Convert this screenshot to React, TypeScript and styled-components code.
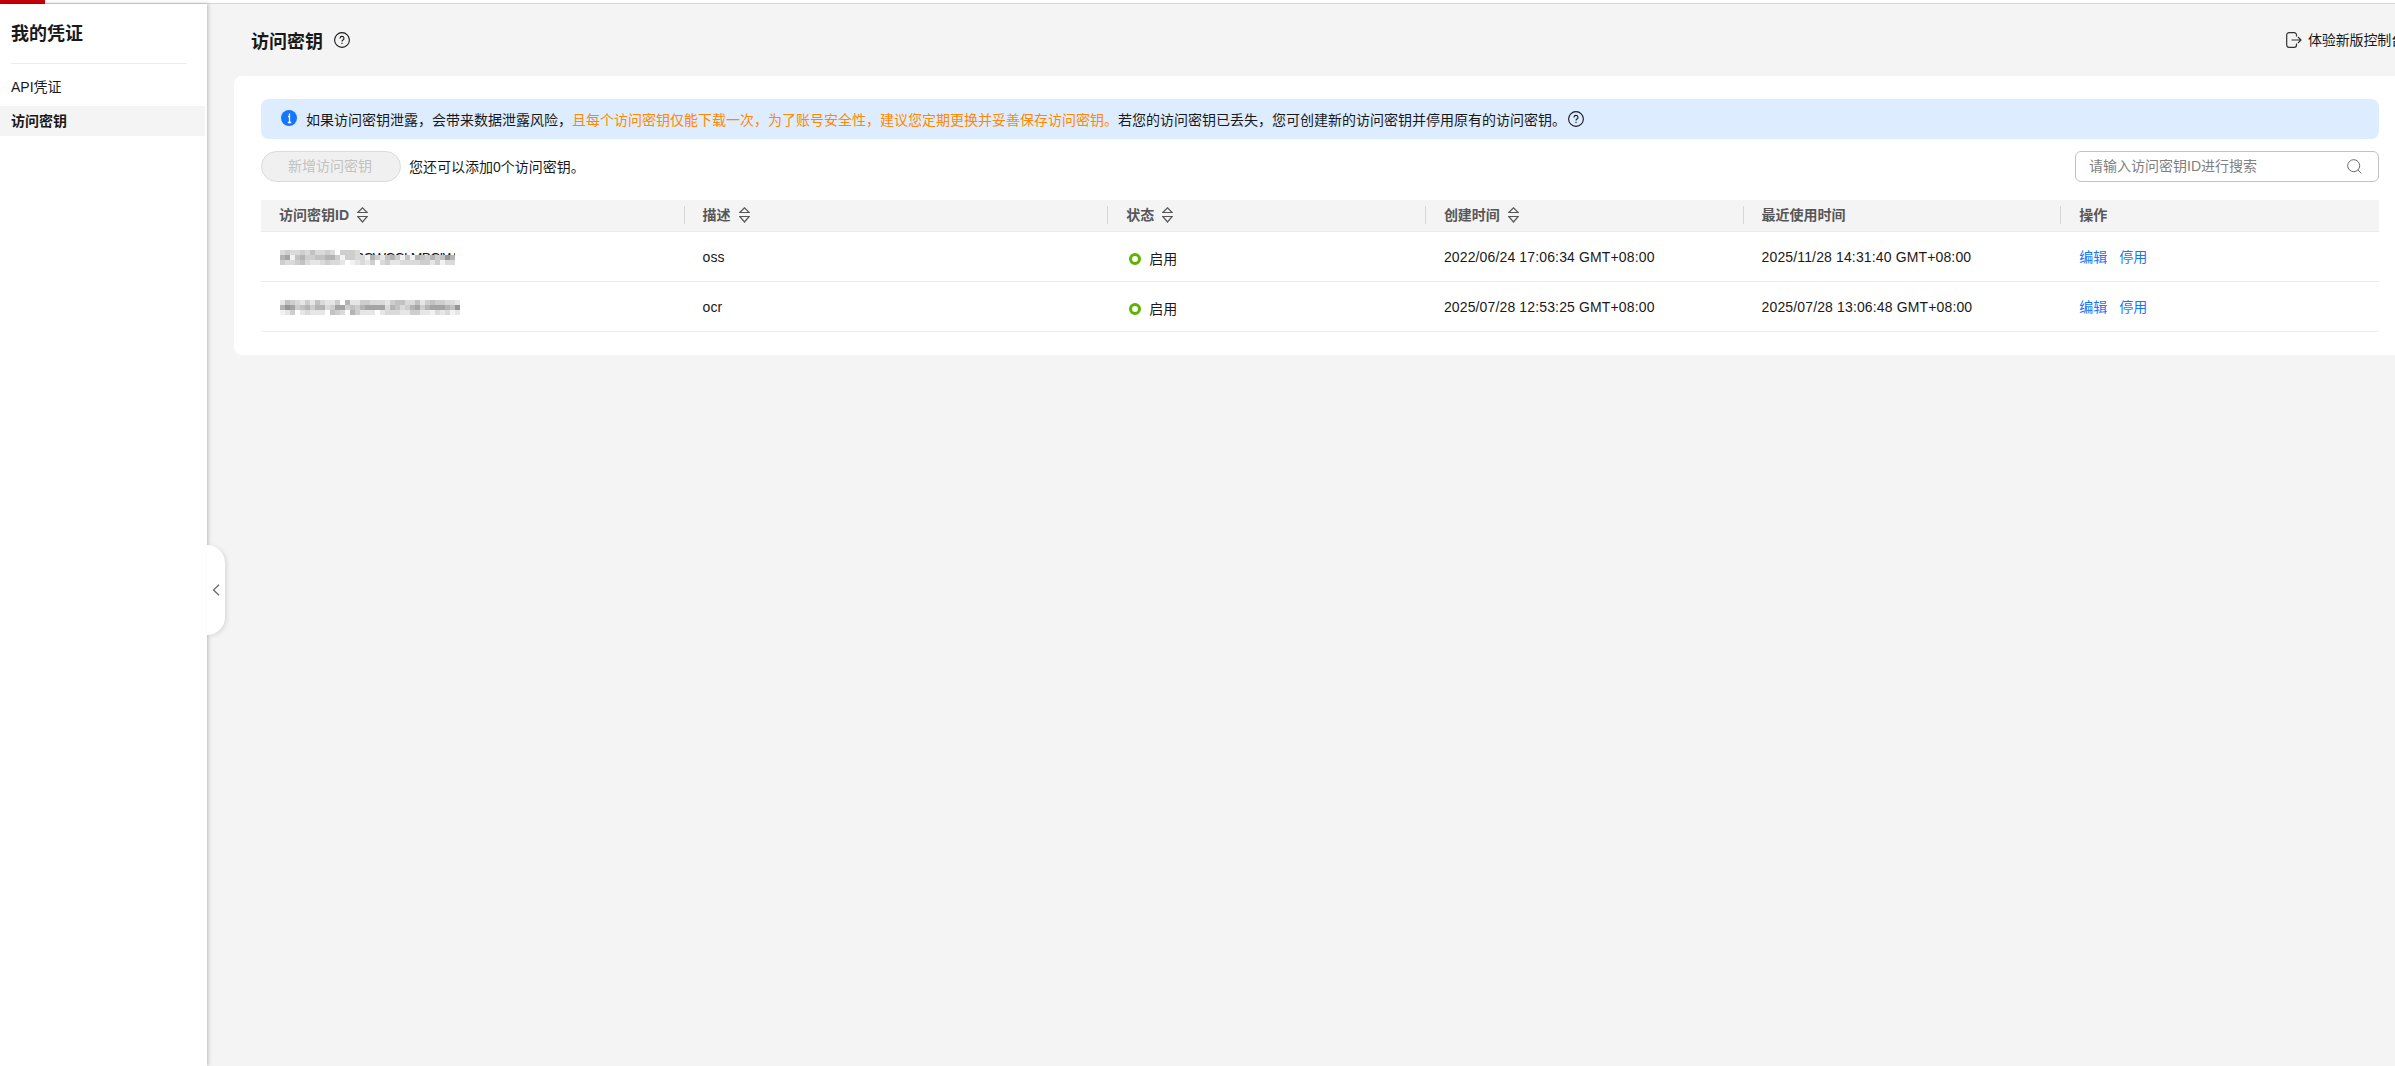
import React from "react";
import styled, { createGlobalStyle, css } from "styled-components";

const Global = createGlobalStyle`
  *, *::before, *::after { box-sizing: border-box; }
  html, body { margin: 0; padding: 0; overflow: hidden; }
  body {
    font-family: "Liberation Sans", "Noto Sans CJK SC", sans-serif;
    font-size: 14px;
    line-height: 20px;
    color: #191919;
    background: #f4f4f4;
  }
  svg { flex: none; }
`;

const Page = styled.div`
  display: flex;
  flex-direction: column;
  width: 100%;
  height: 100vh;
  overflow: hidden;
`;

const TopBar = styled.header`
  flex: none;
  height: 4px;
  background: #fff;
  border-bottom: 1px solid #d6d6d6;
`;

const BrandStrip = styled.div`
  width: 45px;
  height: 4px;
  background: #c7000b;
`;

const Body = styled.div`
  display: flex;
  flex: 1;
  min-height: 0;
`;

const Sidebar = styled.aside`
  position: relative;
  flex: none;
  width: 207px;
  background: #fff;
  box-shadow: 1px 0 4px rgba(0, 0, 0, 0.25);
`;

const SideTitle = styled.h2`
  margin: 0 20px 8px 11px;
  padding: 17px 0 15px;
  border-bottom: 1px solid #ebebeb;
  font-size: 18px;
  font-weight: 700;
  line-height: 27px;
`;

const SideNav = styled.nav`
  display: flex;
  flex-direction: column;
  gap: 4px;
`;

const SideItem = styled.a<{ $active?: boolean }>`
  display: block;
  width: 205px;
  height: 30px;
  padding-left: 11px;
  line-height: 30px;
  ${(p) =>
    p.$active &&
    css`
      background: #f4f4f4;
      font-weight: 700;
    `}
`;

const CollapseTab = styled.button`
  position: absolute;
  left: 207px;
  top: 541px;
  display: flex;
  align-items: center;
  justify-content: center;
  width: 18px;
  height: 90px;
  padding: 0;
  border: 0;
  border-radius: 0 18px 18px 0;
  background: #fff;
  box-shadow: 2px 1px 4px rgba(0, 0, 0, 0.1);
`;

const Main = styled.main`
  flex: 1;
  min-width: 0;
  overflow: hidden;
`;

const PageHead = styled.div`
  display: flex;
  align-items: center;
  height: 72px;
  padding-left: 44px;
`;

const PageTitle = styled.h1`
  margin: 4px 11px 0 0;
  font-size: 18px;
  line-height: 26px;
`;

const NewConsole = styled.a`
  display: flex;
  align-items: center;
  gap: 6px;
  margin-left: auto;
  width: 109px;
  white-space: nowrap;
`;

const NewConsoleText = styled.span`
  letter-spacing: -0.15px;
`;

const Card = styled.section`
  margin-left: 27px;
  height: 279px;
  padding: 23px 16px 0 27px;
  border-radius: 8px 0 0 8px;
  background: #fff;
`;

const Notice = styled.div`
  display: flex;
  align-items: center;
  height: 40px;
  padding-left: 20px;
  border-radius: 8px;
  background: #deecff;
`;

const NoticeText = styled.span`
  margin: 1px 2px 0 9px;
  white-space: nowrap;
`;

const Warn = styled.span`
  color: #ff8800;
`;

const Tools = styled.div`
  display: flex;
  align-items: center;
  margin: 12px 0 18px;
`;

const AddButton = styled.button`
  width: 140px;
  height: 31px;
  padding: 0 2px 2px 0;
  border: 1px solid #dbdbdb;
  border-radius: 16px;
  background: #f0f0f0;
  color: #c2c2c2;
  font: inherit;
`;

const Quota = styled.span`
  margin-left: 8px;
`;

const Search = styled.div`
  display: flex;
  align-items: center;
  justify-content: space-between;
  width: 304px;
  height: 31px;
  margin-left: auto;
  padding: 0 16px 1px 13px;
  border: 1px solid #c2c2c2;
  border-radius: 6px;
  color: #808080;
`;

const Columns = styled.div`
  display: grid;
  grid-template-columns: 20% 20% 15% 15% 15% 15%;
  align-items: center;
`;

const HeadRow = styled(Columns)`
  height: 32px;
  padding-bottom: 1px;
  background: #f4f4f4;
  border-bottom: 1px solid #ebebeb;
  color: #575757;
  font-weight: 700;
`;

const HeadCell = styled.div`
  display: flex;
  align-items: center;
  gap: 8px;
  height: 18px;
  padding-left: 18px;
  line-height: 18px;
  &:not(:last-child) {
    border-right: 1px solid #d6d6d6;
  }
`;

const Row = styled(Columns)`
  height: 50px;
  border-bottom: 1px solid #ededed;
`;

const Cell = styled.div`
  display: flex;
  align-items: center;
  padding-left: 18px;
`;

const Stamp = styled.span`
  letter-spacing: 0.14px;
`;

const State = styled.span`
  display: flex;
  align-items: center;
  gap: 8px;
  padding: 4px 0 0 3px;
`;

const StateRing = styled.i`
  width: 12px;
  height: 12px;
  border: 3px solid #5cb300;
  border-radius: 50%;
`;

const Actions = styled.span`
  display: flex;
  gap: 12px;
  color: #1476ff;
`;

const Masked = styled.div`
  position: relative;
  display: grid;
  grid-auto-rows: 5px;
  margin: 2px 0 0 1px;
`;

const KeyTail = styled.span`
  position: absolute;
  left: 75px;
  top: 0;
  height: 6px;
  overflow: hidden;
  line-height: 16px;
  letter-spacing: -0.8px;
`;

const MaskLine = styled.div`
  position: relative;
  display: flex;
`;

const MaskTile = styled.i`
  width: 5px;
  height: 5px;
`;

const SHADES: Record<string, string> = {
  "-": "transparent",
  "0": "#ffffff", "1": "#f2f2f2", "2": "#e6e6e6", "3": "#dadada", "4": "#cecece",
  "5": "#c2c2c2", "6": "#b4b4b4", "7": "#a4a4a4", "8": "#969696",
};

function Mosaic({ lines, tail }: { lines: string[]; tail: string }) {
  return (
    <Masked>
      {tail && <KeyTail>{tail}</KeyTail>}
      {lines.map((line, y) => (
        <MaskLine key={y}>
          {line.split("").map((c, x) => (
            <MaskTile key={x} style={{ background: SHADES[c] }} />
          ))}
        </MaskLine>
      ))}
    </Masked>
  );
}

function HelpIcon() {
  return (
    <svg width="16" height="16" viewBox="0 0 16 16" fill="none" stroke="#191919" strokeWidth="1.1">
      <circle cx="8" cy="8" r="7.4" />
      <path d="M6 6.4a2 2 0 1 1 3 1.7c-.7.4-1 .7-1 1.4" />
      <path d="M8 10.7v1.2" />
    </svg>
  );
}

function InfoIcon() {
  return (
    <svg width="16" height="18" viewBox="0 0 16 18" fill="none">
      <circle cx="8" cy="8" r="8" fill="#1476ff" />
      <path d="M8.5 3.500v2M7 6.500h1.500v5.500M6.800 12.500h3.400" stroke="#fff" strokeWidth="1.3" />
    </svg>
  );
}

function ExitIcon() {
  return (
    <svg width="16" height="16" viewBox="0 0 16 16" fill="none" stroke="#333" strokeWidth="1.2">
      <path d="M10.5 4.5V3A2.3 2.3 0 0 0 8.2 0.7H3A2.3 2.3 0 0 0 0.7 3v10A2.3 2.3 0 0 0 3 15.3h5.2A2.3 2.3 0 0 0 10.5 13v-1.5" />
      <path d="M5.5 8H15M12 5l3 3-3 3" />
    </svg>
  );
}

function SearchIcon() {
  return (
    <svg width="15" height="15" viewBox="0 0 15 15" fill="none" stroke="#6b6b6b">
      <circle cx="6.7" cy="6.7" r="6" />
      <path d="M11 11l3.3 3.3" />
    </svg>
  );
}

function SortIcon() {
  return (
    <svg width="11" height="16" viewBox="0 0 11 16" fill="none" stroke="#575757" strokeWidth="1.2">
      <path d="M.8 5.5L5.5 .8l4.7 4.700zM.8 9.500L5.500 15l4.700-5.500z" />
    </svg>
  );
}

const HEADS = [
  { label: "访问密钥ID", sort: true },
  { label: "描述", sort: true },
  { label: "状态", sort: true },
  { label: "创建时间", sort: true },
  { label: "最近使用时间", sort: false },
  { label: "操作", sort: false },
];

const KEYS = [
  {
    mask: ["34334353343-4443-------------------", "67156445566414433164256415165464586", "43345322343320123240342233334424133"],
    tail: "BCWCCLMBCIW",
    note: "oss",
    created: "2022/06/24 17:06:34 GMT+08:00",
    used: "2025/11/28 14:31:40 GMT+08:00",
  },
  {
    mask: ["254324253224062244333245533524544332", "687456466347745467777365346746777658", "124023222054306422202333224422132312"],
    tail: "",
    note: "ocr",
    created: "2025/07/28 12:53:25 GMT+08:00",
    used: "2025/07/28 13:06:48 GMT+08:00",
  },
];

export default function App() {
  return (
    <Page>
      <Global />
      <TopBar><BrandStrip /></TopBar>
      <Body>
        <Sidebar>
          <SideTitle>我的凭证</SideTitle>
          <SideNav>
            <SideItem>API凭证</SideItem>
            <SideItem $active>访问密钥</SideItem>
          </SideNav>
          <CollapseTab aria-label="collapse">
            <svg width="8" height="12" viewBox="0 0 8 12" fill="none" stroke="#6b6b6b" strokeWidth="1.3">
              <path d="M7 .7L1.5 6 7 11.300" />
            </svg>
          </CollapseTab>
        </Sidebar>
        <Main>
          <PageHead>
            <PageTitle>访问密钥</PageTitle>
            <HelpIcon />
            <NewConsole><ExitIcon /><NewConsoleText>体验新版控制台</NewConsoleText></NewConsole>
          </PageHead>
          <Card>
            <Notice>
              <InfoIcon />
              <NoticeText>
                如果访问密钥泄露，会带来数据泄露风险，
                <Warn>且每个访问密钥仅能下载一次，为了账号安全性，建议您定期更换并妥善保存访问密钥。</Warn>
                若您的访问密钥已丢失，您可创建新的访问密钥并停用原有的访问密钥。
              </NoticeText>
              <HelpIcon />
            </Notice>
            <Tools>
              <AddButton disabled>新增访问密钥</AddButton>
              <Quota>您还可以添加0个访问密钥。</Quota>
              <Search>请输入访问密钥ID进行搜索<SearchIcon /></Search>
            </Tools>
            <HeadRow>
              {HEADS.map((h) => (
                <HeadCell key={h.label}>{h.label}{h.sort && <SortIcon />}</HeadCell>
              ))}
            </HeadRow>
            {KEYS.map((k) => (
              <Row key={k.note}>
                <Cell><Mosaic lines={k.mask} tail={k.tail} /></Cell>
                <Cell>{k.note}</Cell>
                <Cell><State><StateRing />启用</State></Cell>
                <Cell><Stamp>{k.created}</Stamp></Cell>
                <Cell><Stamp>{k.used}</Stamp></Cell>
                <Cell><Actions><span>编辑</span><span>停用</span></Actions></Cell>
              </Row>
            ))}
          </Card>
        </Main>
      </Body>
    </Page>
  );
}
